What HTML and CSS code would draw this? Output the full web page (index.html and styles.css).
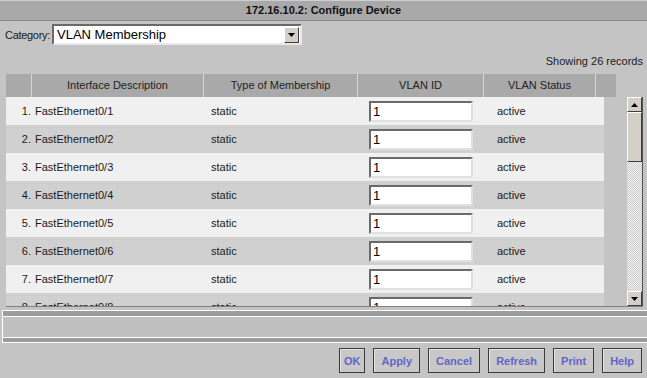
FILE: index.html
```html
<!DOCTYPE html>
<html>
<head>
    <title>172.16.10.2: Configure Device</title>
    <link rel="stylesheet" href="styles.css">
</head>
<body>
    <div class="titlebar">172.16.10.2: Configure Device</div>

    <div class="category">
        <label>Category:</label>
        <div class="select">
            <span class="select-text">VLAN Membership</span>
            <span class="drop">
                <svg width="7" height="4" viewBox="0 0 7 4"><path d="M0 0h7L3.5 4z" fill="#000"/></svg>
            </span>
        </div>
    </div>

    <div class="records">Showing 26 records</div>

    <div class="table">
        <div class="thead">
            <div></div>
            <div>Interface Description</div>
            <div>Type of Membership</div>
            <div>VLAN ID</div>
            <div>VLAN Status</div>
            <div></div>
        </div>
        <div class="tbody">
            <div class="rows">
                <div class="row"><div class="num">1.</div><div>FastEthernet0/1</div><div class="type">static</div><div class="vlan"><input value="1"></div><div class="status">active</div></div>
                <div class="row"><div class="num">2.</div><div>FastEthernet0/2</div><div class="type">static</div><div class="vlan"><input value="1"></div><div class="status">active</div></div>
                <div class="row"><div class="num">3.</div><div>FastEthernet0/3</div><div class="type">static</div><div class="vlan"><input value="1"></div><div class="status">active</div></div>
                <div class="row"><div class="num">4.</div><div>FastEthernet0/4</div><div class="type">static</div><div class="vlan"><input value="1"></div><div class="status">active</div></div>
                <div class="row"><div class="num">5.</div><div>FastEthernet0/5</div><div class="type">static</div><div class="vlan"><input value="1"></div><div class="status">active</div></div>
                <div class="row"><div class="num">6.</div><div>FastEthernet0/6</div><div class="type">static</div><div class="vlan"><input value="1"></div><div class="status">active</div></div>
                <div class="row"><div class="num">7.</div><div>FastEthernet0/7</div><div class="type">static</div><div class="vlan"><input value="1"></div><div class="status">active</div></div>
                <div class="row"><div class="num">8.</div><div>FastEthernet0/8</div><div class="type">static</div><div class="vlan"><input value="1"></div><div class="status">active</div></div>
            </div>
            <div class="scrollbar">
                <div class="sb-btn">
                    <svg width="7" height="4" viewBox="0 0 7 4"><path d="M3.5 0L7 4H0z" fill="#000"/></svg>
                </div>
                <div class="sb-thumb"></div>
                <div class="sb-track"></div>
                <div class="sb-btn">
                    <svg width="7" height="4" viewBox="0 0 7 4"><path d="M0 0h7L3.5 4z" fill="#000"/></svg>
                </div>
            </div>
        </div>
    </div>

    <div class="panel">
        <div class="strip"></div>
        <div class="panel-mid"></div>
        <div class="strip strip-low"></div>
    </div>

    <div class="buttons">
        <button class="btn-ok">OK</button>
        <button>Apply</button>
        <button>Cancel</button>
        <button>Refresh</button>
        <button>Print</button>
        <button>Help</button>
    </div>
</body>
</html>
```

FILE: styles.css
```css
body {
    margin: 0;
    width: 647px;
    height: 378px;
    overflow: hidden;
    background-color: #c4c4c4;
    font-family: "Liberation Sans", Arial, sans-serif;
    font-size: 11px;
    color: #1a1a1a;
}
.titlebar {
    height: 19px;
    line-height: 19px;
    background-color: #a9a9a9;
    border-top: 1px solid #cfcfcf;
    border-bottom: 1px solid #858585;
    text-align: center;
    font-weight: bold;
    color: #111;
}
.category {
    display: flex;
    align-items: center;
    margin-top: 3px;
    padding-left: 5px;
}
.category label {
    width: 47px;
    letter-spacing: -0.3px;
}
.select {
    display: flex;
    align-items: center;
    width: 246px;
    height: 17px;
    background-color: #fff;
    border: 2px solid;
    border-color: #6a6a6a #e8e8e8 #e8e8e8 #6a6a6a;
    font-size: 13px;
    color: #000;
}
.select-text {
    flex: 1;
    padding-left: 3px;
}
.drop {
    display: flex;
    align-items: center;
    justify-content: center;
    width: 13px;
    height: 14px;
    margin-right: 1px;
    background-color: #d4d0c8;
    border: 1px solid;
    border-color: #fff #404040 #404040 #fff;
}
.records {
    margin-top: 9px;
    height: 14px;
    line-height: 14px;
    text-align: right;
    padding-right: 4px;
}
.table {
    margin-top: 6px;
    padding: 0 4px 0 6px;
}
.thead {
    display: grid;
    grid-template-columns: 25px 172px 154px 126px 112px 21px;
    width: 610px;
    height: 23px;
    background-color: #a9a9a9;
}
.thead div {
    line-height: 23px;
    text-align: center;
    border-left: 1px solid #d6d6d6;
    color: #222;
}
.thead div:first-child {
    border-left: none;
}
.tbody {
    display: flex;
    height: 209px;
    border-bottom: 1px solid #808080;
}
.rows {
    width: 604px;
    overflow: hidden;
}
.row {
    display: grid;
    grid-template-columns: 25px 172px 154px 126px 127px;
    align-items: center;
    height: 28px;
    background-color: #f0f0f0;
}
.row:nth-child(even) {
    background-color: #d0d0d0;
}
.row div {
    padding-left: 4px;
}
.row .num {
    text-align: right;
    padding-left: 0;
}
.row .type {
    padding-left: 8px;
}
.row .vlan {
    padding-left: 12px;
}
.row .status {
    padding-left: 14px;
}
.vlan input {
    display: block;
    box-sizing: border-box;
    width: 104px;
    height: 21px;
    margin: 0;
    padding: 0 2px;
    border: 2px solid;
    border-color: #6a6a6a #e0e0e0 #e0e0e0 #6a6a6a;
    background-color: #fff;
    font-family: "Liberation Sans", Arial, sans-serif;
    font-size: 13px;
    color: #000;
}
.scrollbar {
    display: flex;
    flex-direction: column;
    width: 15px;
    margin-left: 23px;
    border-right: 1px solid #505050;
}
.sb-btn {
    display: flex;
    align-items: center;
    justify-content: center;
    box-sizing: border-box;
    height: 15px;
    background-color: #d4d0c8;
    border: 1px solid;
    border-color: #fff #404040 #404040 #fff;
}
.sb-thumb {
    box-sizing: border-box;
    height: 50px;
    background-color: #d4d0c8;
    border: 1px solid;
    border-color: #fff #404040 #404040 #fff;
}
.sb-track {
    flex: 1;
    background-color: #f4f4f4;
    background-image: repeating-conic-gradient(#c8c8c8 0 25%, #f4f4f4 0 50%);
    background-size: 2px 2px;
}
.panel {
    margin: 3px 0 0 2px;
    border: 1px solid #fff;
    border-right: none;
}
.strip {
    height: 5px;
    background-color: #9c9c9c;
    border-bottom: 1px solid #fff;
}
.strip-low {
    height: 4px;
    border-bottom: none;
    border-top: 1px solid #fff;
}
.panel-mid {
    height: 20px;
    background-color: #c0c0c0;
}
.buttons {
    display: flex;
    justify-content: flex-end;
    gap: 8px;
    margin-top: 5px;
    padding-right: 5px;
}
button {
    height: 25px;
    padding: 0 7px;
    background-color: #c8c8c8;
    border: 1px solid #3a3a3a;
    box-shadow: inset 1px 1px 0 #e4e4e4;
    font-family: "Liberation Sans", Arial, sans-serif;
    font-size: 11px;
    font-weight: bold;
    color: #6464c8;
}
.btn-ok {
    padding: 0 4px;
}
```
